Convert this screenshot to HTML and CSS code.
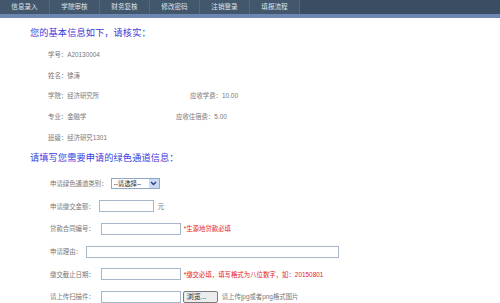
FILE: index.html
```html
<!DOCTYPE html>
<html lang="zh-CN">
<head>
<meta charset="UTF-8">
<title>绿色通道申请</title>
<link rel="stylesheet" href="styles.css">
</head>
<body>

<div class="nav">
    <a class="tab" href="#">信息录入</a>
    <a class="tab" href="#">学院审核</a>
    <a class="tab" href="#">财务复核</a>
    <a class="tab" href="#">修改密码</a>
    <a class="tab" href="#">注销登录</a>
    <a class="tab" href="#">填报流程</a>
</div>

<div class="content">
    <h2 class="title">您的基本信息如下，请核实：</h2>

    <div class="info">
        <div class="info-row">学号：A20130004</div>
        <div class="info-row">姓名：徐涛</div>
        <div class="info-row"><span class="cell cell-college">学院：经济研究所</span>应收学费：10.00</div>
        <div class="info-row"><span class="cell cell-major">专业：金融学</span>应收住宿费：5.00</div>
        <div class="info-row">班级：经济研究1301</div>
    </div>

    <h2 class="title">请填写您需要申请的绿色通道信息：</h2>

    <form class="apply">
        <div class="form-row">
            <label for="kind">申请绿色通道类别：</label>
            <span class="select-wrap">
                <select id="kind" class="select">
                    <option>--请选择--</option>
                </select>
                <span class="select-arrow">
                    <svg width="7" height="5" viewBox="0 0 7 5"><path d="M1 1 L3.5 3.5 L6 1" fill="none" stroke="#2a3f8f" stroke-width="1.4"/></svg>
                </span>
            </span>
        </div>
        <div class="form-row">
            <label for="amount">申请缴交金额：</label>
            <input id="amount" class="field field-short" type="text">
            <span class="unit">元</span>
        </div>
        <div class="form-row">
            <label for="contract">贷款合同编号：</label>
            <input id="contract" class="field field-mid" type="text">
            <span class="hint">*生源地贷款必填</span>
        </div>
        <div class="form-row">
            <label for="reason">申请理由：</label>
            <input id="reason" class="field field-long" type="text">
        </div>
        <div class="form-row">
            <label for="deadline">缴交截止日期：</label>
            <input id="deadline" class="field field-mid" type="text">
            <span class="hint">*缴交必填，填写格式为八位数字，如：20150801</span>
        </div>
        <div class="form-row">
            <label for="scan">请上传扫描件：</label>
            <input id="scan" class="field field-mid" type="text">
            <button type="button" class="browse">浏览...</button>
            <span class="note">请上传jpg或者png格式图片</span>
        </div>
    </form>
</div>

</body>
</html>
```

FILE: styles.css
```css
body {
    margin: 0;
    background: #fff;
    font-family: "Liberation Sans", "Noto Sans CJK SC", sans-serif;
    color: #777;
}
.nav {
    display: flex;
    height: 14px;
    background: #3b4d62;
    border-bottom: 4px solid #6b87b2;
}
.tab {
    width: 49px;
    border-right: 1px solid #53677d;
    background: #42566c;
    color: #dfe4ea;
    font-size: 6.6px;
    line-height: 14px;
    text-align: center;
    text-decoration: none;
}
.content {
    padding-left: 30px;
}
.title {
    margin: 9px 0 0;
    font-size: 9.2px;
    line-height: 12px;
    font-weight: normal;
    color: #3a3ad8;
    letter-spacing: 0.1px;
}
.info {
    margin-top: 6px;
    padding-left: 18px;
}
.info-row {
    height: 20.7px;
    line-height: 20.7px;
    font-size: 6.4px;
    white-space: nowrap;
}
.cell {
    display: inline-block;
}
.cell-college {
    width: 142px;
}
.cell-major {
    width: 128px;
}
.info + .title {
    margin-top: 4px;
}
.apply {
    margin-top: 8px;
    padding-left: 20px;
}
.form-row {
    display: flex;
    align-items: center;
    height: 22.6px;
    font-size: 6.4px;
    white-space: nowrap;
}
.form-row label {
    margin-right: 4px;
}
.field {
    box-sizing: border-box;
    height: 12px;
    margin: 0;
    padding: 0 2px;
    border: 1px solid #a7b7cb;
    background: #fff;
    font-size: 6.4px;
}
.field-short {
    width: 55px;
}
.field-mid {
    width: 80px;
    margin-left: 2px;
}
.field-long {
    width: 253px;
}
.unit {
    margin-left: 4px;
}
.hint {
    margin-left: 3px;
    color: #e52226;
}
.select-wrap {
    position: relative;
    display: inline-block;
    margin-left: -1px;
}
.select {
    appearance: none;
    box-sizing: border-box;
    width: 49px;
    height: 11px;
    margin: 0;
    padding: 0 0 0 2px;
    border: 1px solid #8fa8c4;
    border-radius: 0;
    background: #fff;
    color: #222;
    font-family: "Liberation Sans", "Noto Sans CJK SC", sans-serif;
    font-size: 6.4px;
}
.select-arrow {
    position: absolute;
    top: 1px;
    right: 1px;
    display: flex;
    align-items: center;
    justify-content: center;
    width: 10px;
    height: 9px;
    background: #cbd9f3;
}
.browse {
    box-sizing: border-box;
    width: 35px;
    height: 12px;
    margin: 0 0 0 2px;
    padding: 0 3px;
    border: 1px solid #7a7a7a;
    border-radius: 2px;
    background: #ececec;
    color: #222;
    font-family: "Liberation Sans", "Noto Sans CJK SC", sans-serif;
    font-size: 7px;
    line-height: 10px;
    text-align: left;
}
.note {
    margin-left: 4px;
}
```
